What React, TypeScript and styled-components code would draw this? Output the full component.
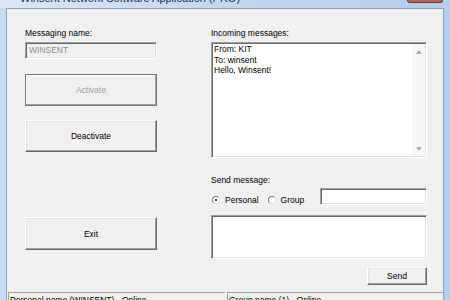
import styled, { createGlobalStyle, css } from "styled-components";

const GlobalStyle = createGlobalStyle`
    html, body {
        margin: 0;
        padding: 0;
        background: #bcd3ec;
    }
    * {
        box-sizing: border-box;
    }
`;

const FONT = `"Liberation Sans", Arial, sans-serif`;

function App() {
    return (
        <>
            <GlobalStyle />
            <Window>
                <TitleBar>
                    <Title>Winsent Network Software Application (PRO)</Title>
                    <CloseButton />
                </TitleBar>
                <Client>
                    <Body>
                        <LeftColumn>
                            <Label>Messaging name:</Label>
                            <TextField disabled>WINSENT</TextField>
                            <Button $height={32} $top={15} $default disabled>
                                Activate
                            </Button>
                            <Button $height={32} $top={14}>
                                Deactivate
                            </Button>
                            <Button $height={33} $top={65}>
                                Exit
                            </Button>
                        </LeftColumn>
                        <RightColumn>
                            <Label>Incoming messages:</Label>
                            <MessageBox>
                                <MessageText>
                                    <div>From: KIT</div>
                                    <div>To: winsent</div>
                                    <div>Hello, Winsent!</div>
                                </MessageText>
                                <ScrollBar>
                                    <Arrow viewBox="0 0 7 4">
                                        <path d="M3.5 0 L7 4 L0 4 Z" />
                                    </Arrow>
                                    <Arrow viewBox="0 0 7 4">
                                        <path d="M0 0 L7 0 L3.5 4 Z" />
                                    </Arrow>
                                </ScrollBar>
                            </MessageBox>
                            <Label $top={17}>Send message:</Label>
                            <SendRow>
                                <RadioItem>
                                    <Radio $checked />
                                    Personal
                                </RadioItem>
                                <RadioItem>
                                    <Radio />
                                    Group
                                </RadioItem>
                                <RecipientField />
                            </SendRow>
                            <ComposeBox />
                            <Button $height={18} $top={8} $width={60} $alignEnd>
                                Send
                            </Button>
                        </RightColumn>
                    </Body>
                    <StatusBar>
                        <StatusPane $width={217}>Personal name (WINSENT) - Online</StatusPane>
                        <StatusPane>Group name (1) - Online</StatusPane>
                    </StatusBar>
                </Client>
            </Window>
        </>
    );
}

export default App;

const Window = styled.div`
    width: 450px;
    height: 300px;
    overflow: hidden;
    display: flex;
    flex-direction: column;
    padding: 0 6px;
    background: linear-gradient(90deg, #c9dcf0 0%, #bcd3ec 40%, #b7cfea 100%);
    font-family: ${FONT};
    font-size: 8.5px;
    color: #000;
`;

const TitleBar = styled.div`
    height: 8px;
    flex: none;
    display: flex;
    align-items: flex-end;
    justify-content: space-between;
    overflow: hidden;
    background: linear-gradient(90deg, #dbe7f4 0%, #c3d7ee 50%, #b5cdea 100%);
    margin: 0 -6px;
    padding: 0 6px 0 20px;
`;

const Title = styled.div`
    font-family: ${FONT};
    font-size: 11px;
    line-height: 11px;
    color: #1e3246;
    margin-bottom: 4px;
    white-space: nowrap;
`;

const CloseButton = styled.div`
    width: 36px;
    height: 3px;
    align-self: flex-start;
    background: #b4665c;
    border: 1px solid #6e3b36;
    border-top: none;
    border-radius: 0 0 3px 3px;
    margin-right: 1px;
`;

const Client = styled.div`
    flex: none;
    background: #f0f0f0;
    border: 1px solid #8ea3bb;
    border-bottom: none;
`;

const Body = styled.div`
    height: 283px;
    display: flex;
    gap: 54px;
    padding: 19px 0 0 18px;
`;

const LeftColumn = styled.div`
    width: 132px;
    display: flex;
    flex-direction: column;
`;

const RightColumn = styled.div`
    width: 216px;
    display: flex;
    flex-direction: column;
`;

const Label = styled.div<{ $top?: number }>`
    height: 10px;
    line-height: 10px;
    margin-top: ${p => p.$top ?? 0}px;
    margin-bottom: 4px;
    white-space: nowrap;
`;

const sunken = css`
    border: 1px solid;
    border-color: #a0a0a0 #ffffff #ffffff #a0a0a0;
    box-shadow: inset 1px 1px 0 #696969, inset -1px -1px 0 #e3e3e3;
`;

const TextField = styled.div<{ disabled?: boolean }>`
    ${sunken};
    height: 17px;
    padding: 2px 3px;
    line-height: 11px;
    background: ${p => (p.disabled ? "#f0f0f0" : "#fff")};
    color: ${p => (p.disabled ? "#8c8c8c" : "#000")};
`;

const Button = styled.button<{
    $height: number;
    $top: number;
    $width?: number;
    $default?: boolean;
    $alignEnd?: boolean;
}>`
    height: ${p => p.$height}px;
    width: ${p => (p.$width ? `${p.$width}px` : "100%")};
    margin-top: ${p => p.$top}px;
    align-self: ${p => (p.$alignEnd ? "flex-end" : "stretch")};
    padding: 0;
    font-family: ${FONT};
    font-size: 8.5px;
    color: #000;
    background: #f0f0f0;
    border: 1px solid;
    border-color: #ffffff #696969 #696969 #ffffff;
    box-shadow: inset -1px -1px 0 #a0a0a0, inset 1px 1px 0 #e3e3e3;

    &:disabled {
        color: #a0a0a0;
    }

    ${p =>
        p.$default &&
        css`
            border-color: #787878;
            box-shadow: inset -1px -1px 0 #a0a0a0, inset 1px 1px 0 #ffffff;
        `}
`;

const MessageBox = styled.div`
    ${sunken};
    height: 116px;
    display: flex;
    background: #fff;
`;

const MessageText = styled.div`
    flex: 1;
    padding: 1px 2px;
    line-height: 10.5px;
`;

const ScrollBar = styled.div`
    width: 13px;
    display: flex;
    flex-direction: column;
    justify-content: space-between;
    align-items: center;
    padding: 6px 0 5px;
    background: #f7f7f7;
    margin: 1px 1px 1px 0;
`;

const Arrow = styled.svg`
    width: 6px;
    height: 4px;
    fill: #a3a3a3;
`;

const SendRow = styled.div`
    height: 17px;
    margin-top: -1px;
    display: flex;
    align-items: flex-end;
`;

const RadioItem = styled.label`
    display: flex;
    align-items: center;
    gap: 5px;
    height: 10px;
    line-height: 10px;
    margin-left: 1px;
    margin-right: 8px;
    white-space: nowrap;
`;

const Radio = styled.span<{ $checked?: boolean }>`
    width: 8px;
    height: 8px;
    border-radius: 50%;
    background: #fff;
    border: 1px solid;
    border-color: #808080 #e3e3e3 #e3e3e3 #808080;
    display: flex;
    align-items: center;
    justify-content: center;

    &::after {
        content: "";
        width: 2px;
        height: 2px;
        border-radius: 50%;
        background: ${p => (p.$checked ? "#000" : "transparent")};
    }
`;

const RecipientField = styled.div`
    ${sunken};
    width: 107px;
    height: 17px;
    margin-left: auto;
    align-self: stretch;
    background: #fff;
`;

const ComposeBox = styled.div`
    ${sunken};
    height: 44px;
    margin-top: 10px;
    background: #fff;
`;

const StatusBar = styled.div`
    height: 20px;
    display: flex;
    gap: 2px;
    padding: 0 0 0 1px;
`;

const StatusPane = styled.div<{ $width?: number }>`
    ${p => (p.$width ? `width: ${p.$width}px;` : "flex: 1;")}
    border-top: 1px solid #a0a0a0;
    border-left: 1px solid #a0a0a0;
    padding: 2px 1px 0;
    line-height: 10px;
    white-space: nowrap;
    overflow: hidden;
`;
